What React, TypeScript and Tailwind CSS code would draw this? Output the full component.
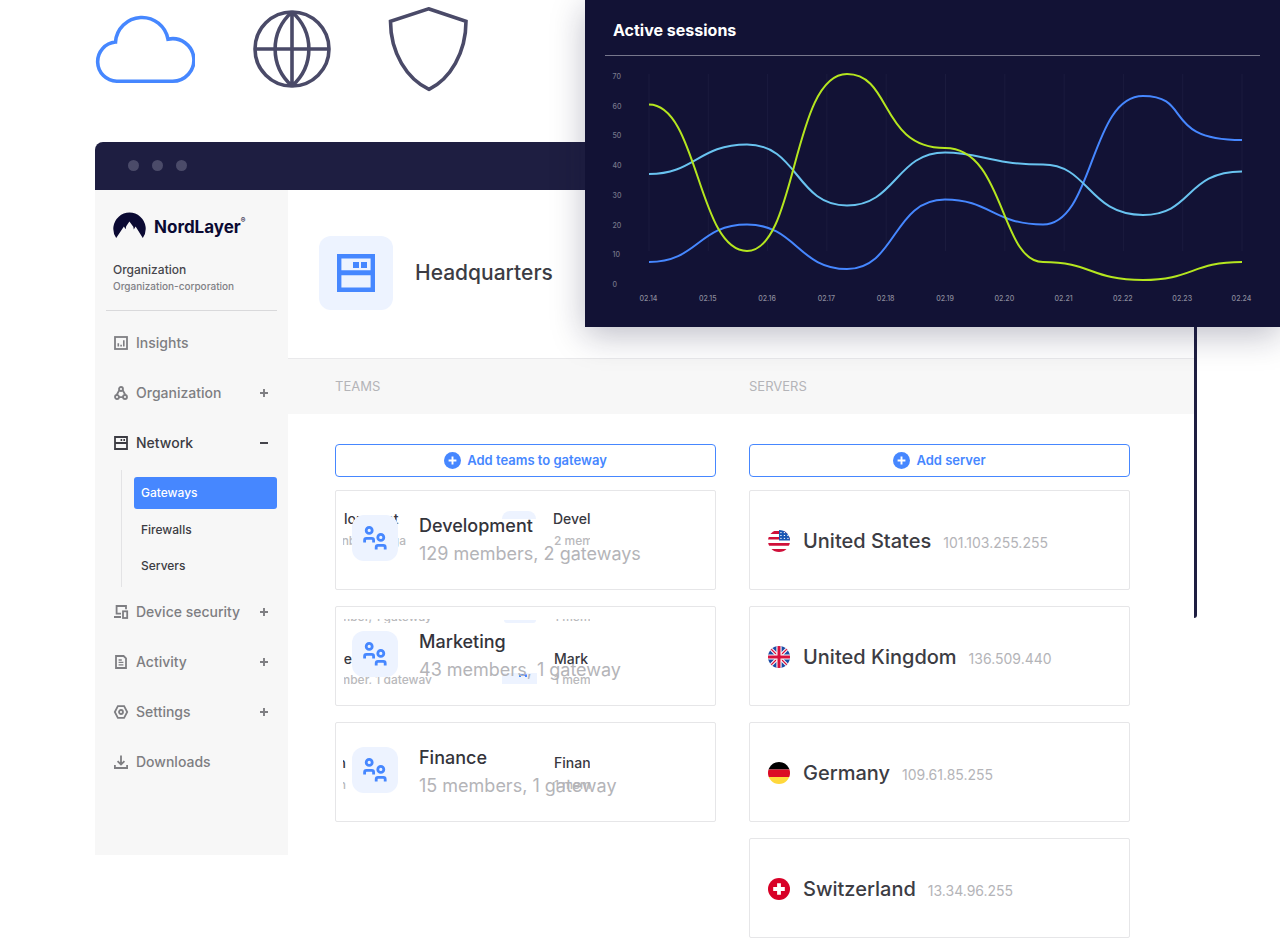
import type { ReactNode } from "react";
import clsx from "clsx";

type NavItem = {
  label: string;
  icon: ReactNode;
  sign?: "+" | "-";
  active?: boolean;
  children?: string[];
};

const navItems: NavItem[] = [
  {
    label: "Insights",
    icon: (
      <>
        <rect x="1" y="1" width="12" height="12" />
        <path d="M4.3 7.2v3.3M7.1 8.7v1.8M9.8 4.3v6.2" strokeWidth="1.6" />
      </>
    ),
  },
  {
    label: "Organization",
    sign: "+",
    icon: (
      <>
        <circle cx="7" cy="3" r="2" />
        <circle cx="3" cy="11" r="2" />
        <circle cx="11" cy="11" r="2" />
        <path d="M5.3 4.3 2.6 9M8.7 4.3 11.4 9M5 11.2h4" />
      </>
    ),
  },
  {
    label: "Network",
    sign: "-",
    active: true,
    icon: (
      <>
        <path d="M1 1h12v12H1zM1 7h12" />
        <path d="M6.6 4h1.6M9.4 4H11" />
      </>
    ),
    children: ["Gateways", "Firewalls", "Servers"],
  },
  {
    label: "Device security",
    sign: "+",
    icon: (
      <>
        <path d="M12 4.3V1H2.6v7.6H7M0 12h7" />
        <rect x="9" y="6.3" width="4.2" height="6.7" />
      </>
    ),
  },
  {
    label: "Activity",
    sign: "+",
    icon: (
      <>
        <path d="M2 1h7.6L12 3.4V13H2z" />
        <path d="M4.6 5h3.2M4.6 7.4h4.8M4.6 9.8h4.8" strokeWidth="1.3" />
      </>
    ),
  },
  {
    label: "Settings",
    sign: "+",
    icon: (
      <>
        <path d="M3.9 1.2h6.2L13.2 7l-3.1 5.8H3.9L.8 7z" />
        <circle cx="7" cy="7" r="2" />
      </>
    ),
  },
  {
    label: "Downloads",
    icon: <path d="M.9 10v3h12.2v-3M7 .5v9M3.6 6.2 7 9.6l3.4-3.4" />,
  },
];

type Ghost = { box: string; text?: string; tone?: string };

// Trailing frames of the cards, each one clipped by its own box
const teams: { name: string; info: string; ghosts: Ghost[] }[] = [
  {
    name: "Development",
    info: "129 members, 2 gateways",
    ghosts: [
      { box: "left-2 top-[18px] w-[60px] h-5", text: "lopment", tone: "text-sm/5 text-[#38383f]" },
      { box: "left-[7px] top-10 w-[63px] h-5 justify-end", text: "nbers, 2 ga", tone: "text-xs/5 text-[#b9b9bc]" },
      { box: "left-[166px] top-5 w-[34px] h-2 rounded-t-lg bg-[#edf3ff]" },
      { box: "left-[217px] top-[18px] w-[38px] h-5", text: "Devel", tone: "text-sm/5 text-[#38383f]" },
      { box: "left-[218px] top-10 w-9 h-5", text: "2 mem", tone: "text-xs/5 text-[#b9b9bc]" },
    ],
  },
  {
    name: "Marketing",
    info: "43 members, 1 gateway",
    ghosts: [
      { box: "left-2 top-3 w-[88px] h-1 items-end justify-end", text: "mber, 1 gateway", tone: "text-xs/3 text-[#b9b9bc]" },
      { box: "left-[168px] top-[13px] w-8 h-[3px] rounded-b-lg bg-[#edf3ff]" },
      { box: "left-[218px] top-3 w-9 h-1 items-end", text: "1 mem", tone: "text-xs/3 text-[#b9b9bc]" },
      { box: "left-2 top-[42px] w-2 h-5 justify-end", text: "e", tone: "text-sm/5 text-[#38383f]" },
      { box: "left-2 top-[63px] w-[88px] h-[14px] justify-end", text: "mber, 1 gateway", tone: "text-xs/5 text-[#b9b9bc]" },
      { box: "left-[166px] top-[66px] w-[35px] h-[11px] bg-[#edf3ff]" },
      { box: "left-[183px] top-[67px] w-[8px] h-[3px] rounded-t-xs border-2 border-b-0 border-[#4687ff]" },
      { box: "left-[218px] top-[42px] w-[34px] h-5", text: "Mark", tone: "text-sm/5 text-[#38383f]" },
      { box: "left-[218px] top-[63px] w-9 h-[14px]", text: "1 mem", tone: "text-xs/5 text-[#b9b9bc]" },
    ],
  },
  {
    name: "Finance",
    info: "15 members, 1 gateway",
    ghosts: [
      { box: "left-[7px] top-[30px] w-[3px] h-5 justify-end", text: "n", tone: "text-sm/5 text-[#38383f]" },
      { box: "left-[7px] top-[52px] w-[3px] h-5 justify-end", text: "n", tone: "text-xs/5 text-[#b9b9bc]" },
      { box: "left-[218px] top-[30px] w-9 h-5", text: "Finan", tone: "text-sm/5 text-[#38383f]" },
      { box: "left-[218px] top-[52px] w-9 h-5", text: "1 mem", tone: "text-xs/5 text-[#b9b9bc]" },
    ],
  },
];

const servers = [
  {
    name: "United States",
    ip: "101.103.255.255",
    flag: (
      <>
        <path fill="#fff" d="M0 0h22v22H0z" />
        <path fill="#d0103a" d="M0 1h22v3H0zM0 7h22v2.6H0zM0 13h22v2.8H0zM0 19h22v3H0z" />
        <path fill="#1a56b4" d="M11 0h11v10.6H11z" />
        <path stroke="#fff" strokeWidth="1" strokeDasharray="1.3 2.2" d="M12.3 2.6h9M12.3 5.5h9M12.3 8.4h9" />
      </>
    ),
  },
  {
    name: "United Kingdom",
    ip: "136.509.440",
    flag: (
      <>
        <path fill="#1b4ba5" d="M0 0h22v22H0z" />
        <path stroke="#fff" strokeWidth="3.2" d="m2 2 18 18M20 2 2 20" />
        <path stroke="#d8103c" strokeWidth="1.1" d="m2 2 18 18M20 2 2 20" />
        <path stroke="#fff" strokeWidth="5.2" d="M11 0v22M0 11h22" />
        <path stroke="#d8103c" strokeWidth="3" d="M11 0v22M0 11h22" />
      </>
    ),
  },
  {
    name: "Germany",
    ip: "109.61.85.255",
    flag: (
      <>
        <path fill="#000" d="M0 0h22v7.5H0z" />
        <path fill="#dc0a24" d="M0 7.5h22V15H0z" />
        <path fill="#ffd83c" d="M0 15h22v7H0z" />
      </>
    ),
  },
  {
    name: "Switzerland",
    ip: "13.34.96.255",
    flag: (
      <>
        <path fill="#d80027" d="M0 0h22v22H0z" />
        <path stroke="#fff" strokeWidth="3.8" d="M11 5.2v11.6M5.2 11h11.6" />
      </>
    ),
  },
];

const dates = ["02.14", "02.15", "02.16", "02.17", "02.18", "02.19", "02.20", "02.21", "02.22", "02.23", "02.24"];
const ticks = [70, 60, 50, 40, 30, 20, 10, 0];

const lines = [
  {
    color: "#4687ff",
    d: "M649 262C698 262 698 224.5 747 224.5S798 269 847 269C896 269 893 199.5 945 199.5C990 199.5 994 224.5 1043 224.5C1094 224.5 1090 96 1143 96C1193 96 1161 140 1242 140",
  },
  {
    color: "#69c3f0",
    d: "M649 174C695 174 698 144.5 747 144.5C798 144.5 796 205.5 847 205.5C896 205.5 896 152.5 945 152.5C980 152.5 990 164.5 1043 164.5C1089 164.5 1088 215 1143 215C1193 215 1185 171.5 1242 171.5",
  },
  {
    color: "#b5e61f",
    d: "M649 104.5C698 104.5 698 251 747 251C797 251 792 74 847 74C892 74 880 148 945 148C1005 148 1000 262 1043 262C1092 262 1090 280 1143 280C1192 280 1192 262 1242 262",
  },
];

function ProductIcons() {
  return (
    <div className="mb-[44px] flex h-[98px] items-center pl-[95px]">
      <svg viewBox="95 14 100 70" className="mr-[58px] h-[70px] w-[100px]" fill="none" stroke="#4687ff" strokeWidth="3.6">
        <path d="M116.7 81.3A19.7 19.7 0 0 1 115.5 42A26.5 26.5 0 0 1 168 39.2A21.3 21.3 0 1 1 172.5 81.3Z" />
      </svg>
      <svg viewBox="253 10 78 78" className="mr-[57px] size-[78px]" fill="none" stroke="#4a4a68" strokeWidth="3.6">
        <circle cx="292" cy="49" r="37" />
        <path d="M292 12v74M255 49h74M292 12c-22.5 20-22.5 54 0 74M292 12c22.5 20 22.5 54 0 74" />
      </svg>
      <svg viewBox="388 6 82 86" className="h-[86px] w-[82px]" fill="none" stroke="#4a4a68" strokeWidth="3.6">
        <path d="M428.5 8.8 466 21.3C466 53 450 79 429 89.3C407 79 390.5 53 390.5 21.3Z" />
      </svg>
    </div>
  );
}

function Logo() {
  return (
    <a href="#" className="ml-[18px] flex h-[26px] items-center gap-2 text-[#0b0a33]">
      <svg viewBox="0 0 33 26" className="h-[26px] w-[33px]" fill="currentColor">
        <path d="M3.2 26A16.2 16.2 0 1 1 29.8 26L22.6 14.4 20.8 17.4 20.3 14.8 16.4 9.4 13.2 14.2 12.6 17.2 10.9 14.6z" />
      </svg>
      <span className="flex items-start pt-[3px] text-[17px] font-bold leading-6">
        NordLayer
        <span className="text-[7px] leading-3">®</span>
      </span>
    </a>
  );
}

function Sidebar() {
  return (
    <aside className="w-[193px] shrink-0 self-start bg-[#f7f7f7] pb-[68px] pt-[22px]">
      <Logo />
      <p className="ml-[18px] mt-6 text-xs font-medium leading-4 text-[#46464c]">Organization</p>
      <p className="ml-[18px] text-[10px] font-medium leading-4 text-[#808085]">Organization-corporation</p>
      <hr className="mx-[11px] mb-[7px] mt-4 border-[#d9d9db]" />
      <nav>
        {navItems.map((item) => (
          <div key={item.label}>
            <button
              className={clsx(
                "flex h-[50px] w-full items-center pl-[19px] pr-[19px] text-sm font-medium",
                item.active ? "text-[#3c3c43]" : "text-[#7e7e82]",
              )}
            >
              <svg viewBox="0 0 14 14" className="mr-2 size-[14px] overflow-visible" fill="none" stroke="currentColor" strokeWidth="1.8">
                {item.icon}
              </svg>
              {item.label}
              {item.sign && (
                <svg viewBox="0 0 10 10" className="ml-auto size-[10px]" stroke="currentColor" strokeWidth="1.9">
                  <path d={item.sign === "+" ? "M5 1v8M1 5h8" : "M1 5h8"} />
                </svg>
              )}
            </button>
            {item.children && (
              <ul className="ml-[26px] mr-[11px] mt-[2px] border-l border-[#e3e3e5] pb-[3px] pl-3 pt-[7px] text-xs font-medium">
                {item.children.map((child, i) => (
                  <li key={child}>
                    <a
                      href="#"
                      className={clsx(
                        "flex items-center rounded-[3px] pl-[7px]",
                        i === 0 ? "mb-[3px] h-8 bg-[#4687ff] text-white" : "h-9 text-[#3c3c43]",
                      )}
                    >
                      {child}
                    </a>
                  </li>
                ))}
              </ul>
            )}
          </div>
        ))}
      </nav>
    </aside>
  );
}

function AddButton({ children }: { children: ReactNode }) {
  return (
    <button className="mb-[13px] flex h-[33px] w-full items-center justify-center gap-[6px] rounded border border-[#4687ff] text-[13px] font-semibold text-[#4687ff]">
      <svg viewBox="0 0 17 17" className="size-[17px]">
        <circle cx="8.5" cy="8.5" r="8.5" fill="#4687ff" />
        <path d="M8.5 4.6v7.8M4.6 8.5h7.8" stroke="#fff" strokeWidth="1.9" />
      </svg>
      {children}
    </button>
  );
}

function TeamCard({ name, info, ghosts }: (typeof teams)[number]) {
  return (
    <li className="relative h-[100px] rounded-xs border border-[#e6e6e8]">
      {ghosts.map((ghost, i) => (
        <span
          key={i}
          aria-hidden="true"
          className={clsx("absolute flex overflow-hidden whitespace-nowrap font-medium", ghost.box, ghost.tone)}
        >
          {ghost.text}
        </span>
      ))}
      <div className="relative flex pl-4">
        <div className="mt-6 flex size-[46px] items-center justify-center rounded-xl bg-[#edf3ff]">
          <svg viewBox="0 0 24 24" className="size-6" fill="none" stroke="#4687ff" strokeWidth="2.8">
            <circle cx="6.2" cy="4.4" r="3" />
            <circle cx="17.8" cy="11.4" r="3" />
            <path d="M1.6 16.6v-2.4q0-1.8 1.8-1.8h5.4q1.8 0 1.8 1.8v2.4M13.2 23.6v-2.4q0-1.8 1.8-1.8h5.4q1.8 0 1.8 1.8v2.4" />
          </svg>
        </div>
        <div className="ml-[21px] mt-[21px] text-lg leading-7">
          <h3 className="font-medium text-[#34343b]">{name}</h3>
          <p className="text-[#b4b4b8]">{info}</p>
        </div>
      </div>
    </li>
  );
}

function Gateway() {
  return (
    <main className="min-w-0 flex-1">
      <header className="flex items-center gap-[22px] pb-[48px] pl-[31px] pt-[46px]">
        <div className="flex size-[74px] items-center justify-center rounded-xl bg-[#edf3ff]">
          <svg viewBox="0 0 38 38" className="size-[38px]" fill="none" stroke="#4687ff" strokeWidth="4.4">
            <path d="M2.2 2.2h33.6v33.6H2.2z" />
            <path d="M2.2 18.8h33.6" strokeWidth="5" />
            <path d="M16 11h6M24 11h6" strokeWidth="6" />
          </svg>
        </div>
        <h1 className="text-[21px] font-medium leading-7 text-[#3c3c43]">Headquarters</h1>
      </header>
      <div className="grid h-14 grid-cols-2 items-center gap-[33px] border-t border-[#e9e9eb] bg-[#f7f7f7] pl-[47px] pr-16 text-[13px] text-[#b4b4b8]">
        <h2>TEAMS</h2>
        <h2>SERVERS</h2>
      </div>
      <div className="grid grid-cols-2 gap-[33px] pb-1 pl-[47px] pr-16 pt-[30px]">
        <section>
          <AddButton>Add teams to gateway</AddButton>
          <ul className="flex flex-col gap-4">
            {teams.map((team) => (
              <TeamCard key={team.name} {...team} />
            ))}
          </ul>
        </section>
        <section>
          <AddButton>Add server</AddButton>
          <ul className="flex flex-col gap-4">
            {servers.map((server) => (
              <li key={server.name} className="flex h-[100px] items-center rounded-xs border border-[#e6e6e8] pl-[18px] pt-[2px]">
                <svg viewBox="0 0 22 22" className="mr-[13px] size-[22px] rounded-full">
                  {server.flag}
                </svg>
                <p className="flex items-baseline gap-3 text-xl font-medium text-[#3c3c43]">
                  {server.name}
                  <span className="text-sm font-normal text-[#b4b4b8]">{server.ip}</span>
                </p>
              </li>
            ))}
          </ul>
        </section>
      </div>
    </main>
  );
}

function ActiveSessions() {
  return (
    <section className="absolute left-[585px] right-0 top-0 bg-[#121235] px-5 shadow-[0_8px_32px_rgba(18,18,53,0.28)]">
      <h2 className="flex h-14 items-center border-b border-[#77778c] pl-2 pt-1 text-base font-bold text-white">
        Active sessions
      </h2>
      <svg viewBox="605 56 655 271" className="block w-full" fill="none">
        {dates.map((date, i) => (
          <g key={date}>
            <path d={`M${649 + i * 59.3} 74v177`} stroke="#1b1b3e" />
            <text x={648.5 + i * 59.3} y="301" textAnchor="middle" fill="#8a8a9b" className="text-[7px] font-medium">
              {date}
            </text>
          </g>
        ))}
        {ticks.map((tick, i) => (
          <text key={tick} x="612.5" y={79 + i * 29.7} fill="#77778a" className="text-[7px] font-medium">
            {tick}
          </text>
        ))}
        {lines.map((line) => (
          <path key={line.color} d={line.d} stroke={line.color} strokeWidth="2" />
        ))}
      </svg>
    </section>
  );
}

export default function App() {
  return (
    <div className="relative min-h-screen overflow-hidden bg-white font-['Inter',sans-serif]">
      <ProductIcons />
      <div className="ml-[95px] mr-[83px]">
        <div className="flex h-12 items-center gap-[13px] rounded-t-lg bg-[#1e1e41] pb-[2px] pl-[33px]">
          <span className="size-[11px] rounded-full bg-[#4b4b69]" />
          <span className="size-[11px] rounded-full bg-[#4b4b69]" />
          <span className="size-[11px] rounded-full bg-[#4b4b69]" />
        </div>
        <div className="flex">
          <Sidebar />
          <Gateway />
          <div className="h-[428px] w-[3px] shrink-0 rounded-br-sm bg-[#1e1e41]" />
        </div>
      </div>
      <ActiveSessions />
    </div>
  );
}
